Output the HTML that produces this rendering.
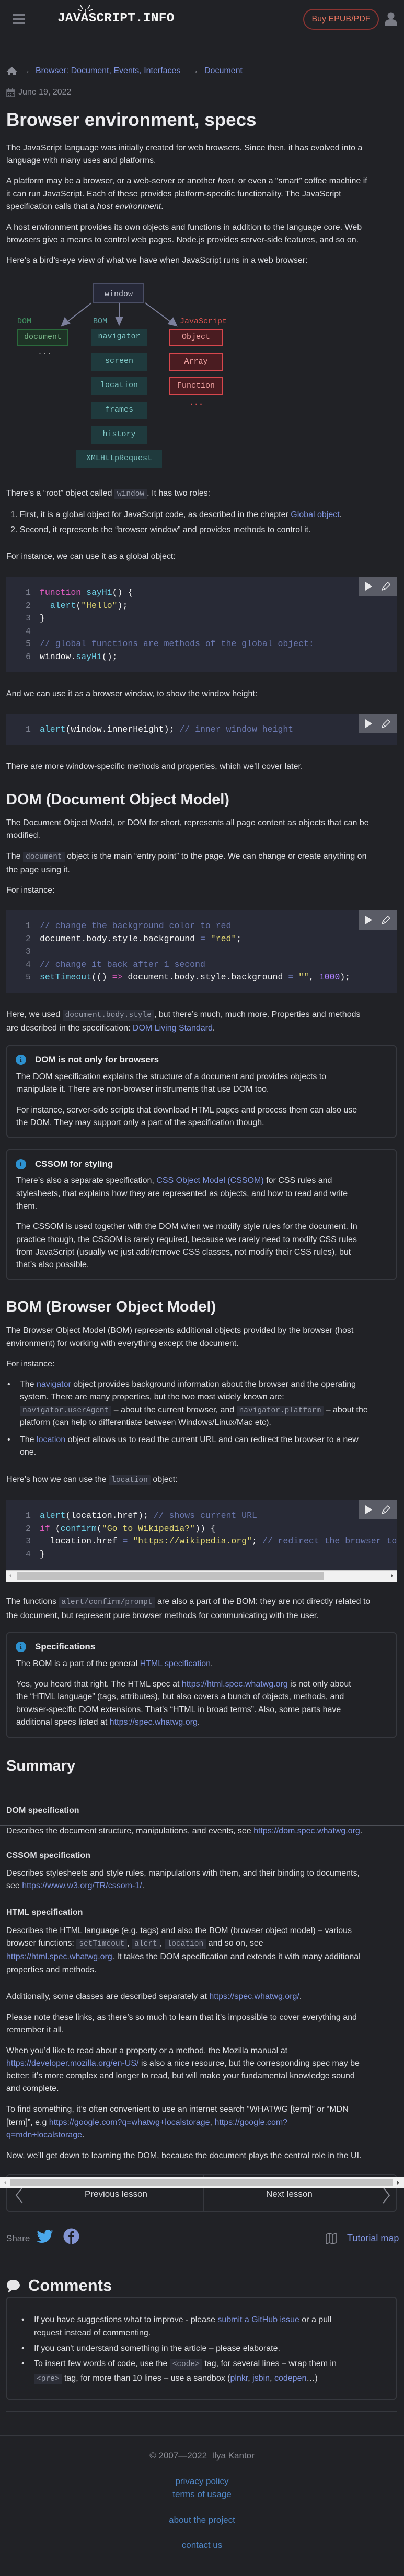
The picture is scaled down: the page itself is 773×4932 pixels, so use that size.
<!DOCTYPE html>
<html><head><meta charset="utf-8">
<style>
html,body{margin:0;padding:0;background:#212226;}
body{width:773px;height:4932px;position:relative;overflow:hidden;font-family:"Liberation Sans",sans-serif;font-size:16px;color:#dedfe3;}
.t{position:absolute;left:12px;white-space:nowrap;line-height:24px;height:24px;}
a{color:#7f94e0;text-decoration:none;}
code,.m{font-family:"Liberation Mono",monospace;}
code{background:#2c2e37;color:#9a9eab;font-size:14.5px;padding:2px 5px;border-radius:2px;}
h{position:absolute;left:12px;font-weight:bold;color:#ebebee;white-space:nowrap;}
.cb{position:absolute;left:12px;width:748px;background:#282a36;}
.cl{position:absolute;left:37px;font-family:"Liberation Mono",monospace;font-size:16.5px;line-height:24px;height:24px;white-space:pre;color:#f2f2f2;}
.cl b{font-weight:normal;color:#7d8190;display:inline-block;width:27px;}
.btn{position:absolute;right:0;top:0;width:74px;height:37px;background:#5a5c66;}
.btn:after{content:"";position:absolute;left:37px;top:0;width:1px;height:37px;background:#3e4048;}
.kw{color:#e05cc0}.fn{color:#6dd0e6}.st{color:#e6db74}.cm{color:#6b78b0}.nu{color:#ae81ff}
.box{position:absolute;left:12px;width:743px;border:2px solid #36383e;border-radius:6px;}
.ii{position:absolute;left:18px;width:20px;height:20px;border-radius:50%;background:#2d91cf;color:#1a1b1e;font:bold 13px "Liberation Serif",serif;text-align:center;line-height:20px;}
.bt{font-weight:bold;font-size:17px;color:#ececee;}
.dg{position:absolute;font-family:"Liberation Mono",monospace;font-size:15px;text-align:center;box-sizing:border-box;line-height:31px;}
.bom{background:#1f3a3d;color:#80c8c6;}
.js{background:#4a1c21;border:2px solid #d8474d;color:#f0a3a3;line-height:29px;}
.sb{position:absolute;background:#f1f1f1;}
.fc{position:absolute;left:0;width:773px;text-align:center;line-height:24px;}
</style></head><body>

<!-- header -->
<div style="position:absolute;left:25px;top:26px;width:23px;height:4px;background:#777982"></div>
<div style="position:absolute;left:25px;top:34px;width:23px;height:4px;background:#777982"></div>
<div style="position:absolute;left:25px;top:42px;width:23px;height:4px;background:#777982"></div>
<div class="m" style="position:absolute;left:110px;top:21px;font-size:24.5px;font-weight:bold;color:#f4f4f4;letter-spacing:0.2px;line-height:30px">JAVASCRIPT.INFO</div>
<svg style="position:absolute;left:148px;top:8px" width="30" height="18"><g stroke="#f4f4f4" stroke-width="1.6"><line x1="15" y1="16" x2="15" y2="9"/><line x1="10" y1="9" x2="6" y2="2"/><line x1="20" y1="9" x2="24" y2="2"/><line x1="8" y1="13" x2="1" y2="10"/><line x1="22" y1="13" x2="29" y2="10"/></g></svg>
<div style="position:absolute;left:580px;top:17px;width:141px;height:36px;border:2px solid #8e3432;border-radius:20px;color:#e2735f;text-align:center;line-height:36px;font-size:16px">Buy EPUB/PDF</div>
<svg style="position:absolute;left:735px;top:22px" width="26" height="27"><circle cx="13" cy="8" r="6.5" fill="#7a7c85"/><path d="M1 27 C1 17 6 15 13 15 C20 15 25 17 25 27 Z" fill="#7a7c85"/></svg>

<!-- breadcrumb -->
<svg style="position:absolute;left:12px;top:127px" width="21" height="18"><path d="M10.5 1 L20.5 10 L18 10 L18 17 L13 17 L13 12 L8 12 L8 17 L3 17 L3 10 L0.5 10 Z" fill="#8b8d96"/></svg>
<div class="t" style="top:124px;left:42px;color:#9a9ca5">→</div>
<div class="t" style="top:124px;left:68px"><a>Browser: Document, Events, Interfaces</a></div>
<div class="t" style="top:124px;left:364px;color:#9a9ca5">→</div>
<div class="t" style="top:124px;left:391px"><a>Document</a></div>
<svg style="position:absolute;left:12px;top:169px" width="17" height="17"><rect x="1" y="3" width="15" height="13" fill="none" stroke="#6f717a" stroke-width="1.5"/><rect x="1" y="3" width="15" height="4" fill="#6f717a"/><g fill="#6f717a"><rect x="4" y="9" width="2" height="2"/><rect x="8" y="9" width="2" height="2"/><rect x="12" y="9" width="2" height="2"/><rect x="4" y="12" width="2" height="2"/><rect x="8" y="12" width="2" height="2"/><rect x="4" y="0" width="2" height="4"/><rect x="11" y="0" width="2" height="4"/></g></svg>
<div class="t" style="top:165px;left:35px;color:#8b8d96">June 19, 2022</div>

<h style="top:209px;font-size:35px;line-height:42px">Browser environment, specs</h>

<div class="t" style="top:272px">The JavaScript language was initially created for web browsers. Since then, it has evolved into a</div>
<div class="t" style="top:296px">language with many uses and platforms.</div>
<div class="t" style="top:335px">A platform may be a browser, or a web-server or another <i>host</i>, or even a “smart” coffee machine if</div>
<div class="t" style="top:360px">it can run JavaScript. Each of these provides platform-specific functionality. The JavaScript</div>
<div class="t" style="top:384px">specification calls that a <i>host environment</i>.</div>
<div class="t" style="top:424px">A host environment provides its own objects and functions in addition to the language core. Web</div>
<div class="t" style="top:448px">browsers give a means to control web pages. Node.js provides server-side features, and so on.</div>
<div class="t" style="top:487px">Here’s a bird’s-eye view of what we have when JavaScript runs in a web browser:</div>

<!-- diagram -->
<svg style="position:absolute;left:0;top:540px" width="460" height="90">
<rect x="179" y="3" width="96" height="36" fill="#262837" stroke="#4b4f66" stroke-width="2"/>
<text x="227" y="27" fill="#c9cbd6" font-family="Liberation Mono" font-size="15" text-anchor="middle">window</text>
<g stroke="#7c809c" stroke-width="2" fill="#7c809c">
<line x1="175" y1="40" x2="130" y2="75"/><path d="M118 84 L124 69 L133 79 Z"/>
<line x1="228" y1="40" x2="228" y2="70"/><path d="M222 68 L234 68 L228 82 Z"/>
<line x1="278" y1="40" x2="325" y2="75"/><path d="M338 84 L322 80 L331 69 Z"/>
</g></svg>
<div class="m" style="position:absolute;left:33px;top:607px;font-size:15px;color:#3f8c5e">DOM</div>
<div class="m" style="position:absolute;left:178px;top:607px;font-size:15px;color:#5fa5a6">BOM</div>
<div class="m" style="position:absolute;left:344px;top:607px;font-size:15px;color:#d9534f">JavaScript</div>
<div class="dg" style="left:33px;top:629px;width:98px;height:34px;background:#1e3326;border:2px solid #2b6a3c;color:#7cb98a;line-height:29px">document</div>
<div class="m" style="position:absolute;left:72px;top:666px;color:#aaa;font-size:15px">...</div>
<div class="dg bom" style="left:175px;top:629px;width:106px;height:34px">navigator</div>
<div class="dg bom" style="left:175px;top:676px;width:106px;height:34px">screen</div>
<div class="dg bom" style="left:175px;top:722px;width:106px;height:34px">location</div>
<div class="dg bom" style="left:175px;top:769px;width:106px;height:34px">frames</div>
<div class="dg bom" style="left:175px;top:816px;width:106px;height:34px">history</div>
<div class="dg bom" style="left:146px;top:862px;width:164px;height:34px">XMLHttpRequest</div>
<div class="dg js" style="left:323px;top:629px;width:104px;height:34px">Object</div>
<div class="dg js" style="left:323px;top:676px;width:104px;height:34px">Array</div>
<div class="dg js" style="left:323px;top:722px;width:104px;height:34px">Function</div>
<div class="m" style="position:absolute;left:362px;top:763px;color:#e05555;font-size:15px;font-weight:bold">...</div>

<div class="t" style="top:933px">There’s a “root” object called <code>window</code>. It has two roles:</div>
<div class="t" style="top:974px;left:20px">1. First, it is a global object for JavaScript code, as described in the chapter <a>Global object</a>.</div>
<div class="t" style="top:1003px;left:20px">2. Second, it represents the “browser window” and provides methods to control it.</div>
<div class="t" style="top:1054px">For instance, we can use it as a global object:</div>

<!-- code 1 -->
<div class="cb" style="top:1104px;height:183px"><div class="btn"></div>
<div class="cl" style="top:19px"><b>1</b><span class="kw">function</span> <span class="fn">sayHi</span>() {</div>
<div class="cl" style="top:43.5px"><b>2</b>  <span class="fn">alert</span>(<span class="st">"Hello"</span>);</div>
<div class="cl" style="top:68px"><b>3</b>}</div>
<div class="cl" style="top:92.5px"><b>4</b></div>
<div class="cl" style="top:117px"><b>5</b><span class="cm">// global functions are methods of the global object:</span></div>
<div class="cl" style="top:141.5px"><b>6</b>window.<span class="fn">sayHi</span>();</div>
</div>

<div class="t" style="top:1317px">And we can use it as a browser window, to show the window height:</div>
<div class="cb" style="top:1367px;height:60px"><div class="btn"></div>
<div class="cl" style="top:18px"><b>1</b><span class="fn">alert</span>(window.innerHeight); <span class="cm">// inner window height</span></div>
</div>
<div class="t" style="top:1456px">There are more window-specific methods and properties, which we’ll cover later.</div>

<h style="top:1513px;font-size:29px;line-height:36px">DOM (Document Object Model)</h>
<div class="t" style="top:1564px">The Document Object Model, or DOM for short, represents all page content as objects that can be</div>
<div class="t" style="top:1588px">modified.</div>
<div class="t" style="top:1628px">The <code>document</code> object is the main “entry point” to the page. We can change or create anything on</div>
<div class="t" style="top:1654px">the page using it.</div>
<div class="t" style="top:1693px">For instance:</div>

<div class="cb" style="top:1743px;height:158px"><div class="btn"></div>
<div class="cl" style="top:18px"><b>1</b><span class="cm">// change the background color to red</span></div>
<div class="cl" style="top:42.5px"><b>2</b>document.body.style.background <span class="cm">=</span> <span class="st">"red"</span>;</div>
<div class="cl" style="top:67px"><b>3</b></div>
<div class="cl" style="top:91.5px"><b>4</b><span class="cm">// change it back after 1 second</span></div>
<div class="cl" style="top:116px"><b>5</b><span class="fn">setTimeout</span>(() <span class="kw">=&gt;</span> document.body.style.background <span class="cm">=</span> <span class="st">""</span>, <span class="nu">1000</span>);</div>
</div>

<div class="t" style="top:1931px">Here, we used <code>document.body.style</code>, but there’s much, much more. Properties and methods</div>
<div class="t" style="top:1957px">are described in the specification: <a>DOM Living Standard</a>.</div>

<!-- box 1 -->
<div class="box" style="top:2001px;height:173px"></div>
<div class="ii" style="left:30px;top:2019px">i</div>
<div class="t bt" style="top:2017px;left:67px">DOM is not only for browsers</div>
<div class="t" style="top:2050px;left:31px">The DOM specification explains the structure of a document and provides objects to</div>
<div class="t" style="top:2074px;left:31px">manipulate it. There are non-browser instruments that use DOM too.</div>
<div class="t" style="top:2114px;left:31px">For instance, server-side scripts that download HTML pages and process them can also use</div>
<div class="t" style="top:2138px;left:31px">the DOM. They may support only a part of the specification though.</div>

<!-- box 2 -->
<div class="box" style="top:2200px;height:246px"></div>
<div class="ii" style="left:30px;top:2219px">i</div>
<div class="t bt" style="top:2217px;left:67px">CSSOM for styling</div>
<div class="t" style="top:2249px;left:31px">There’s also a separate specification, <a>CSS Object Model (CSSOM)</a> for CSS rules and</div>
<div class="t" style="top:2274px;left:31px">stylesheets, that explains how they are represented as objects, and how to read and write</div>
<div class="t" style="top:2298px;left:31px">them.</div>
<div class="t" style="top:2337px;left:31px">The CSSOM is used together with the DOM when we modify style rules for the document. In</div>
<div class="t" style="top:2362px;left:31px">practice though, the CSSOM is rarely required, because we rarely need to modify CSS rules</div>
<div class="t" style="top:2386px;left:31px">from JavaScript (usually we just add/remove CSS classes, not modify their CSS rules), but</div>
<div class="t" style="top:2410px;left:31px">that’s also possible.</div>

<h style="top:2484px;font-size:29px;line-height:36px">BOM (Browser Object Model)</h>
<div class="t" style="top:2536px">The Browser Object Model (BOM) represents additional objects provided by the browser (host</div>
<div class="t" style="top:2561px">environment) for working with everything except the document.</div>
<div class="t" style="top:2600px">For instance:</div>
<div class="t" style="top:2639px;left:14px">•</div>
<div class="t" style="top:2639px;left:38px">The <a>navigator</a> object provides background information about the browser and the operating</div>
<div class="t" style="top:2663px;left:38px">system. There are many properties, but the two most widely known are:</div>
<div class="t" style="top:2688px;left:38px"><code>navigator.userAgent</code> – about the current browser, and <code>navigator.platform</code> – about the</div>
<div class="t" style="top:2712px;left:38px">platform (can help to differentiate between Windows/Linux/Mac etc).</div>
<div class="t" style="top:2745px;left:14px">•</div>
<div class="t" style="top:2745px;left:38px">The <a>location</a> object allows us to read the current URL and can redirect the browser to a new</div>
<div class="t" style="top:2769px;left:38px">one.</div>
<div class="t" style="top:2821px">Here’s how we can use the <code>location</code> object:</div>

<div class="cb" style="top:2872px;height:134px;overflow:hidden"><div class="btn"></div>
<div class="cl" style="top:18px"><b>1</b><span class="fn">alert</span>(location.href); <span class="cm">// shows current URL</span></div>
<div class="cl" style="top:42.5px"><b>2</b><span class="kw">if</span> (<span class="fn">confirm</span>(<span class="st">"Go to Wikipedia?"</span>)) {</div>
<div class="cl" style="top:67px"><b>3</b>  location.href <span class="cm">=</span> <span class="st">"https://wikipedia.org"</span>; <span class="cm">// redirect the browser to another URL</span></div>
<div class="cl" style="top:91.5px"><b>4</b>}</div>
</div>
<div class="sb" style="left:12px;top:3006px;width:748px;height:21px;border-top:1px solid #ccc"></div>
<div style="position:absolute;left:33px;top:3010px;width:587px;height:15px;background:#c1c1c1"></div>
<div style="position:absolute;left:18px;top:3013px;width:0;height:0;border-top:4px solid transparent;border-bottom:4px solid transparent;border-right:4px solid #a3a3a3"></div>
<div style="position:absolute;left:748px;top:3013px;width:0;height:0;border-top:4px solid transparent;border-bottom:4px solid transparent;border-left:4px solid #505050"></div>

<div class="t" style="top:3055px">The functions <code>alert/confirm/prompt</code> are also a part of the BOM: they are not directly related to</div>
<div class="t" style="top:3082px">the document, but represent pure browser methods for communicating with the user.</div>

<div class="box" style="top:3125px;height:198px"></div>
<div class="ii" style="left:30px;top:3143px">i</div>
<div class="t bt" style="top:3141px;left:67px">Specifications</div>
<div class="t" style="top:3174px;left:31px">The BOM is a part of the general <a>HTML specification</a>.</div>
<div class="t" style="top:3213px;left:31px">Yes, you heard that right. The HTML spec at <a>https://html.spec.whatwg.org</a> is not only about</div>
<div class="t" style="top:3237px;left:31px">the “HTML language” (tags, attributes), but also covers a bunch of objects, methods, and</div>
<div class="t" style="top:3262px;left:31px">browser-specific DOM extensions. That’s “HTML in broad terms”. Also, some parts have</div>
<div class="t" style="top:3286px;left:31px">additional specs listed at <a>https://spec.whatwg.org</a>.</div>

<h style="top:3363px;font-size:29px;line-height:36px">Summary</h>
<div class="t" style="top:3413px">Talking about standards, we have:</div>
<div class="t" style="top:3494px">Describes the document structure, manipulations, and events, see <a>https://dom.spec.whatwg.org</a>.</div>
<div style="position:absolute;left:0;top:3400px;width:773px;height:95px;background:#212226;border-bottom:2px solid #4c4f56"></div>
<div class="t" style="top:3455px;font-weight:bold">DOM specification</div>
<div class="t" style="top:3541px;font-weight:bold">CSSOM specification</div>
<div class="t" style="top:3575px">Describes stylesheets and style rules, manipulations with them, and their binding to documents,</div>
<div class="t" style="top:3599px">see <a>https://www.w3.org/TR/cssom-1/</a>.</div>
<div class="t" style="top:3650px;font-weight:bold">HTML specification</div>
<div class="t" style="top:3685px">Describes the HTML language (e.g. tags) and also the BOM (browser object model) – various</div>
<div class="t" style="top:3709px">browser functions: <code>setTimeout</code>, <code>alert</code>, <code>location</code> and so on, see</div>
<div class="t" style="top:3735px"><a>https://html.spec.whatwg.org</a>. It takes the DOM specification and extends it with many additional</div>
<div class="t" style="top:3760px">properties and methods.</div>
<div class="t" style="top:3811px">Additionally, some classes are described separately at <a>https://spec.whatwg.org/</a>.</div>
<div class="t" style="top:3851px">Please note these links, as there’s so much to learn that it’s impossible to cover everything and</div>
<div class="t" style="top:3875px">remember it all.</div>
<div class="t" style="top:3915px">When you’d like to read about a property or a method, the Mozilla manual at</div>
<div class="t" style="top:3939px"><a>https://developer.mozilla.org/en-US/</a> is also a nice resource, but the corresponding spec may be</div>
<div class="t" style="top:3963px">better: it’s more complex and longer to read, but will make your fundamental knowledge sound</div>
<div class="t" style="top:3987px">and complete.</div>
<div class="t" style="top:4027px">To find something, it’s often convenient to use an internet search “WHATWG [term]” or “MDN</div>
<div class="t" style="top:4052px">[term]”, e.g <a>https://google.com?q=whatwg+localstorage</a>, <a>https://google.com?</a></div>
<div class="t" style="top:4076px"><a>q=mdn+localstorage</a>.</div>
<div class="t" style="top:4116px">Now, we’ll get down to learning the DOM, because the document plays the central role in the UI.</div>

<!-- nav -->
<div class="box" style="top:4163px;height:68px"></div>
<div style="position:absolute;left:389px;top:4165px;width:2px;height:68px;background:#36383e"></div>
<svg style="position:absolute;left:28px;top:4186px" width="18" height="34"><path d="M15 2 L3 17 L15 32" fill="none" stroke="#8b8d96" stroke-width="2"/></svg>
<svg style="position:absolute;left:730px;top:4186px" width="18" height="34"><path d="M3 2 L15 17 L3 32" fill="none" stroke="#8b8d96" stroke-width="2"/></svg>
<div class="t" style="top:4189px;left:162px;font-size:17px">Previous lesson</div>
<div class="t" style="top:4189px;left:509px;font-size:17px">Next lesson</div>
<div class="sb" style="left:0;top:4168px;width:773px;height:21px"></div>
<div style="position:absolute;left:20px;top:4171px;width:731px;height:15px;background:#c4c4c4"></div>
<div style="position:absolute;left:8px;top:4175px;width:0;height:0;border-top:4px solid transparent;border-bottom:4px solid transparent;border-right:4px solid #a3a3a3"></div>
<div style="position:absolute;left:760px;top:4175px;width:0;height:0;border-top:4px solid transparent;border-bottom:4px solid transparent;border-left:4px solid #505050"></div>

<!-- share -->
<div class="t" style="top:4274px;color:#8b8d96;font-size:17px">Share</div>
<svg style="position:absolute;left:69px;top:4268px" width="34" height="30" viewBox="0 0 24 20"><path d="M23 2.3c-.8.4-1.7.6-2.6.7.9-.6 1.6-1.4 2-2.5-.9.5-1.9.9-2.9 1.1C18.6.6 17.4 0 16.1 0c-2.5 0-4.5 2-4.5 4.5 0 .4 0 .7.1 1C7.9 5.3 4.6 3.5 2.4.8c-.4.7-.6 1.4-.6 2.3 0 1.6.8 2.9 2 3.7-.7 0-1.4-.2-2-.6v.1c0 2.2 1.6 4 3.6 4.4-.4.1-.8.2-1.2.2-.3 0-.6 0-.8-.1.6 1.8 2.2 3.1 4.2 3.1-1.5 1.2-3.5 1.9-5.6 1.9H1c2 1.3 4.4 2 6.9 2 8.3 0 12.8-6.9 12.8-12.8v-.6c.9-.6 1.6-1.4 2.3-2.3z" fill="#4aa8ec"/></svg>
<svg style="position:absolute;left:121px;top:4266px" width="31" height="31"><circle cx="15.5" cy="15.5" r="15" fill="#8294d2"/><path d="M17 31 L17 17 L20.5 17 L21 13.5 L17 13.5 L17 11 C17 9.5 17.7 9 19 9 L21 9 L21 6 C20 5.8 19 5.8 18 5.8 C15 5.8 13.3 7.6 13.3 10.6 L13.3 13.5 L10 13.5 L10 17 L13.3 17 L13.3 31 Z" fill="#1e1f23"/></svg>
<svg style="position:absolute;left:622px;top:4274px" width="24" height="24"><path d="M2 4 L8 2 L15 4 L21 2 L21 20 L15 22 L8 20 L2 22 Z M8 2 L8 20 M15 4 L15 22" fill="none" stroke="#8b8d96" stroke-width="1.6"/></svg>
<div class="t" style="top:4273px;left:664px;font-size:18px"><a>Tutorial map</a></div>

<!-- comments -->
<svg style="position:absolute;left:12px;top:4364px" width="27" height="27"><ellipse cx="13.5" cy="11" rx="12.5" ry="10" fill="#e6e6e8"/><path d="M3 26 L6 17 L12 20 Z" fill="#e6e6e8"/></svg>
<h style="top:4357px;left:54px;font-size:31px;line-height:38px">Comments</h>
<div class="box" style="top:4397px;height:194px"></div>
<div class="t" style="top:4430px;left:41px">•</div>
<div class="t" style="top:4430px;left:65px">If you have suggestions what to improve - please <a>submit a GitHub issue</a> or a pull</div>
<div class="t" style="top:4455px;left:65px">request instead of commenting.</div>
<div class="t" style="top:4485px;left:41px">•</div>
<div class="t" style="top:4485px;left:65px">If you can't understand something in the article – please elaborate.</div>
<div class="t" style="top:4514px;left:41px">•</div>
<div class="t" style="top:4514px;left:65px">To insert few words of code, use the <code>&lt;code&gt;</code> tag, for several lines – wrap them in</div>
<div class="t" style="top:4542px;left:65px"><code>&lt;pre&gt;</code> tag, for more than 10 lines – use a sandbox (<a>plnkr</a>, <a>jsbin</a>, <a>codepen</a>…)</div>

<div style="position:absolute;left:12px;top:4616px;width:748px;height:2px;background:#36383e"></div>
<div style="position:absolute;left:0;top:4662px;width:773px;height:2px;background:#36383e"></div>

<div class="fc" style="top:4690px;color:#8b8d96;font-size:17px">© 2007—2022&nbsp; Ilya Kantor</div>
<div class="fc" style="top:4739px;color:#4f86c6;font-size:17px">privacy policy</div>
<div class="fc" style="top:4764px;color:#4f86c6;font-size:17px">terms of usage</div>
<div class="fc" style="top:4813px;color:#4f86c6;font-size:17px">about the project</div>
<div class="fc" style="top:4861px;color:#4f86c6;font-size:17px">contact us</div>

<!-- play/edit icons -->
<svg style="position:absolute;left:686px;top:1104px" width="74" height="37"><path d="M13 10 L13 27 L26 18.5 Z" fill="#e8e8ea"/><path d="M45 26 L47 20 L56 11 L60 15 L51 24 Z M47 20 L51 24" fill="none" stroke="#e8e8ea" stroke-width="1.5"/></svg>
<svg style="position:absolute;left:686px;top:1367px" width="74" height="37"><path d="M13 10 L13 27 L26 18.5 Z" fill="#e8e8ea"/><path d="M45 26 L47 20 L56 11 L60 15 L51 24 Z M47 20 L51 24" fill="none" stroke="#e8e8ea" stroke-width="1.5"/></svg>
<svg style="position:absolute;left:686px;top:1743px" width="74" height="37"><path d="M13 10 L13 27 L26 18.5 Z" fill="#e8e8ea"/><path d="M45 26 L47 20 L56 11 L60 15 L51 24 Z M47 20 L51 24" fill="none" stroke="#e8e8ea" stroke-width="1.5"/></svg>
<svg style="position:absolute;left:686px;top:2872px" width="74" height="37"><path d="M13 10 L13 27 L26 18.5 Z" fill="#e8e8ea"/><path d="M45 26 L47 20 L56 11 L60 15 L51 24 Z M47 20 L51 24" fill="none" stroke="#e8e8ea" stroke-width="1.5"/></svg>
</body></html>
